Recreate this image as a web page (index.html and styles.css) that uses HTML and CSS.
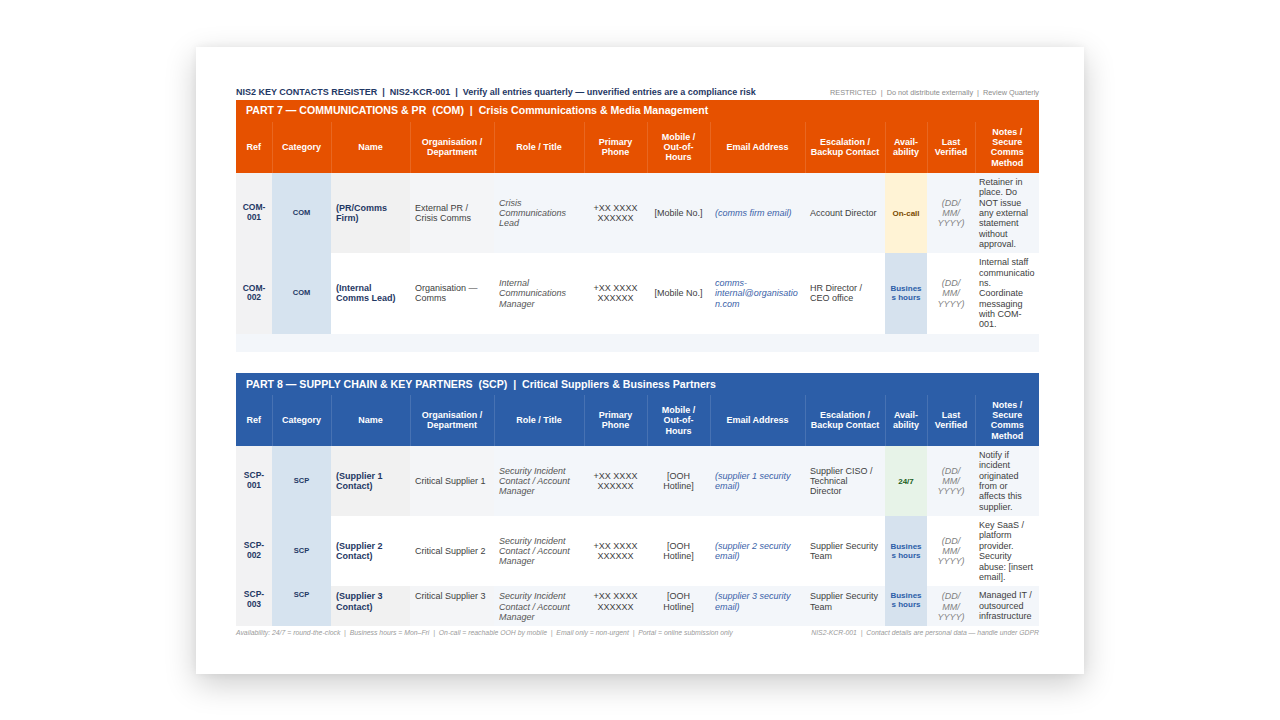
FILE: index.html
```html
<!DOCTYPE html>
<html lang="en">
<head>
<meta charset="utf-8">
<title>NIS2 Key Contacts Register</title>
<link rel="stylesheet" href="styles.css">
</head>
<body>
<div class="sheet">
  <div class="topline">
    <span class="doc-title">NIS2 KEY CONTACTS REGISTER &nbsp;|&nbsp; NIS2-KCR-001 &nbsp;|&nbsp; Verify all entries quarterly — unverified entries are a compliance risk</span>
    <span class="doc-meta">RESTRICTED &nbsp;|&nbsp; Do not distribute externally &nbsp;|&nbsp; Review Quarterly</span>
  </div>

  <table class="reg com">
    <colgroup>
      <col class="c-ref"><col class="c-cat"><col class="c-name"><col class="c-org"><col class="c-role"><col class="c-phone"><col class="c-mob"><col class="c-email"><col class="c-esc"><col class="c-avail"><col class="c-ver"><col class="c-notes">
    </colgroup>
    <thead>
      <tr class="banner"><th colspan="12">PART 7 — COMMUNICATIONS &amp; PR &nbsp;(COM) &nbsp;| &nbsp;Crisis Communications &amp; Media Management</th></tr>
      <tr class="heads">
        <th>Ref</th><th>Category</th><th>Name</th><th>Organisation / Department</th><th>Role / Title</th><th>Primary Phone</th><th>Mobile / Out-of-Hours</th><th>Email Address</th><th>Escalation / Backup Contact</th><th>Avail-ability</th><th>Last Verified</th><th>Notes / Secure Comms Method</th>
      </tr>
    </thead>
    <tbody>
      <tr class="odd">
        <td class="ref">COM-001</td><td class="cat">COM</td><td class="name">(PR/Comms Firm)</td><td class="org">External PR / Crisis Comms</td><td class="role">Crisis Communications Lead</td><td class="ctr">+XX XXXX XXXXXX</td><td class="ctr">[Mobile No.]</td><td class="email">(comms firm email)</td><td>Account Director</td><td class="avail oncall">On-call</td><td class="ver">(DD/<br>MM/<br>YYYY)</td><td class="notes">Retainer in place. Do NOT issue any external statement without approval.</td>
      </tr>
      <tr class="even">
        <td class="ref">COM-002</td><td class="cat">COM</td><td class="name">(Internal Comms Lead)</td><td class="org">Organisation — Comms</td><td class="role">Internal Communications Manager</td><td class="ctr">+XX XXXX XXXXXX</td><td class="ctr">[Mobile No.]</td><td class="email">comms-internal@organisation.com</td><td>HR Director / CEO office</td><td class="avail biz">Business hours</td><td class="ver">(DD/<br>MM/<br>YYYY)</td><td class="notes">Internal staff communications. Coordinate messaging with COM-001.</td>
      </tr>
      <tr class="spacer"><td colspan="12"></td></tr>
    </tbody>
  </table>

  <table class="reg scp">
    <colgroup>
      <col class="c-ref"><col class="c-cat"><col class="c-name"><col class="c-org"><col class="c-role"><col class="c-phone"><col class="c-mob"><col class="c-email"><col class="c-esc"><col class="c-avail"><col class="c-ver"><col class="c-notes">
    </colgroup>
    <thead>
      <tr class="banner"><th colspan="12">PART 8 — SUPPLY CHAIN &amp; KEY PARTNERS &nbsp;(SCP) &nbsp;| &nbsp;Critical Suppliers &amp; Business Partners</th></tr>
      <tr class="heads">
        <th>Ref</th><th>Category</th><th>Name</th><th>Organisation / Department</th><th>Role / Title</th><th>Primary Phone</th><th>Mobile / Out-of-Hours</th><th>Email Address</th><th>Escalation / Backup Contact</th><th>Avail-ability</th><th>Last Verified</th><th>Notes / Secure Comms Method</th>
      </tr>
    </thead>
    <tbody>
      <tr class="odd">
        <td class="ref">SCP-001</td><td class="cat">SCP</td><td class="name">(Supplier 1 Contact)</td><td class="org">Critical Supplier 1</td><td class="role">Security Incident Contact / Account Manager</td><td class="ctr">+XX XXXX XXXXXX</td><td class="ctr">[OOH Hotline]</td><td class="email">(supplier 1 security email)</td><td>Supplier CISO / Technical Director</td><td class="avail h24">24/7</td><td class="ver">(DD/<br>MM/<br>YYYY)</td><td class="notes">Notify if incident originated from or affects this supplier.</td>
      </tr>
      <tr class="even">
        <td class="ref">SCP-002</td><td class="cat">SCP</td><td class="name">(Supplier 2 Contact)</td><td class="org">Critical Supplier 2</td><td class="role">Security Incident Contact / Account Manager</td><td class="ctr">+XX XXXX XXXXXX</td><td class="ctr">[OOH Hotline]</td><td class="email">(supplier 2 security email)</td><td>Supplier Security Team</td><td class="avail biz">Business hours</td><td class="ver">(DD/<br>MM/<br>YYYY)</td><td class="notes">Key SaaS / platform provider. Security abuse: [insert email].</td>
      </tr>
      <tr class="odd top">
        <td class="ref">SCP-003</td><td class="cat">SCP</td><td class="name">(Supplier 3 Contact)</td><td class="org">Critical Supplier 3</td><td class="role">Security Incident Contact / Account Manager</td><td class="ctr">+XX XXXX XXXXXX</td><td class="ctr">[OOH Hotline]</td><td class="email">(supplier 3 security email)</td><td>Supplier Security Team</td><td class="avail biz">Business hours</td><td class="ver">(DD/<br>MM/<br>YYYY)</td><td class="notes">Managed IT / outsourced infrastructure</td>
      </tr>
    </tbody>
  </table>

  <div class="footline">
    <span>Availability: 24/7 = round-the-clock &nbsp;|&nbsp; Business hours = Mon–Fri &nbsp;|&nbsp; On-call = reachable OOH by mobile &nbsp;|&nbsp; Email only = non-urgent &nbsp;|&nbsp; Portal = online submission only</span>
    <span>NIS2-KCR-001 &nbsp;|&nbsp; Contact details are personal data — handle under GDPR</span>
  </div>
</div>
</body>
</html>
```

FILE: styles.css
```css
html, body {
  margin: 0;
  padding: 0;
}
body {
  background: #ffffff;
  min-height: 100vh;
  display: flex;
  align-items: center;
  justify-content: center;
  font-family: "Liberation Sans", Arial, sans-serif;
  color: #404040;
}
.sheet {
  width: 803px;
  height: 551px;
  padding: 40px 45px 36px 40px;
  background: #ffffff;
  box-shadow: 0 10px 30px rgba(0, 0, 0, 0.2), 0 0 8px rgba(0, 0, 0, 0.06);
  display: flex;
  flex-direction: column;
}
.topline {
  display: flex;
  justify-content: space-between;
  align-items: baseline;
  height: 13px;
}
.doc-title {
  font-size: 9px;
  font-weight: bold;
  color: #1f3864;
}
.doc-meta {
  font-size: 7.3px;
  color: #8c8c8c;
}
.reg {
  width: 803px;
  table-layout: fixed;
  border-collapse: collapse;
  font-size: 9px;
  line-height: 1.15;
}
.c-ref { width: 36px; }
.c-cat { width: 59px; }
.c-name { width: 79px; }
.c-org { width: 84px; }
.c-role { width: 90px; }
.c-phone { width: 63px; }
.c-mob { width: 63px; }
.c-email { width: 95px; }
.c-esc { width: 80px; }
.c-avail { width: 42px; }
.c-ver { width: 48px; }
.c-notes { width: 64px; }

.banner th {
  height: 22px;
  padding: 0 10px;
  text-align: left;
  font-size: 10.6px;
  font-weight: bold;
  color: #ffffff;
  white-space: pre;
}
.heads th {
  height: 41px;
  padding: 5px 5px;
  font-size: 9px;
  font-weight: bold;
  color: #ffffff;
  text-align: center;
  vertical-align: middle;
  border-left: 1px solid rgba(255, 255, 255, 0.13);
  overflow-wrap: break-word;
}
.heads th:first-child { border-left: none; }
.com thead { background: #e65100; }
.scp thead { background: #2c5ea8; }
.scp { margin-top: 21px; }

.reg td {
  padding: 4px 5px;
  vertical-align: middle;
  text-align: left;
  overflow-wrap: break-word;
  word-wrap: break-word;
}
.odd td { background: #f3f6fa; }
.even td { background: #ffffff; }
.reg td.ref {
  background: #f2f2f3;
  text-align: center;
  font-weight: bold;
  font-size: 8.5px;
  color: #1f3864;
  padding: 4px 3px;
}
.reg td.cat {
  background: #d6e3ef;
  text-align: center;
  font-weight: bold;
  font-size: 7.5px;
  color: #1f3864;
}
.odd td.name { background: #f1f1f1; }
.name {
  font-weight: bold;
  color: #1f3864;
}
.odd td.org { background: #f4f5f7; }
.role {
  font-style: italic;
  color: #555555;
}
.ctr { text-align: center !important; }
.email {
  font-style: italic;
  color: #3a62a8;
}
.reg td.avail {
  text-align: center;
  font-weight: bold;
  font-size: 8px;
  line-height: 9px;
}
.reg td.oncall { background: #fff3d5; color: #7a4a00; }
.reg td.biz { background: #d6e2ee; color: #2c5ea8; }
.reg td.h24 { background: #e7f3e8; color: #1b5e20; }
.reg td.ver {
  text-align: center;
  font-style: italic;
  color: #808080;
}
.notes { padding: 4px 4px !important; }
.top td { vertical-align: top; padding-top: 5px; }
.spacer td {
  height: 18px;
  padding: 0;
  background: #f3f6fa;
}
.footline {
  display: flex;
  justify-content: space-between;
  margin-top: 3px;
  font-size: 6.85px;
  font-style: italic;
  color: #9a9a9a;
}
```
